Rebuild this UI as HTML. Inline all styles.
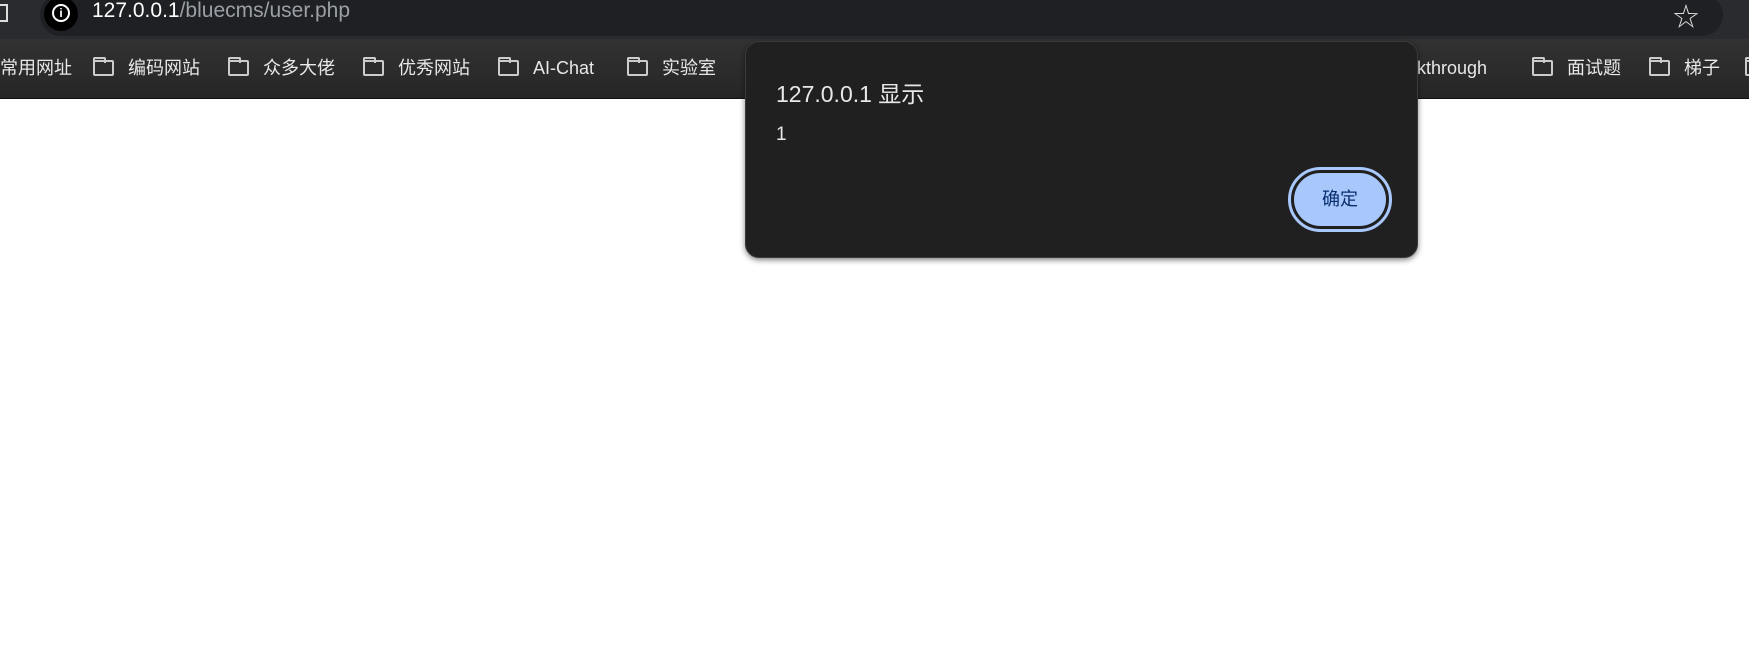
<!DOCTYPE html><html><head><meta charset="utf-8"><style>
body{margin:0;width:1749px;height:666px;background:#fff;position:relative;overflow:hidden;font-family:"Liberation Sans","Noto Sans CJK SC",sans-serif}
.top{position:absolute;left:0;top:0;width:1749px;height:39px;background:#2a2b2e}
.url{position:absolute;left:40px;top:-6px;width:1683px;height:42px;border-radius:21px;background:#1f2023}
.bm{position:absolute;left:0;top:39px;width:1749px;height:59px;background:linear-gradient(#323232,#262626);border-bottom:1px solid #111}
.t{position:absolute;color:#e8e8e8;font-size:18px;white-space:nowrap;top:56px;height:24px;line-height:24px}
.f{position:absolute;top:60px;width:21px;height:16px;border:2px solid #ccc;border-radius:2px;box-sizing:border-box}
.f:before{content:"";position:absolute;left:-2px;top:-5px;width:9px;height:4px;border:2px solid #ccc;border-bottom:none;border-radius:2px 2px 0 0}
.dlg{position:absolute;left:745px;top:41px;width:673px;height:217px;background:#202020;border-radius:14px;box-shadow:0 2px 6px rgba(0,0,0,.5);border:1px solid #3a3a3a;box-sizing:border-box}
</style></head><body>
<div class="top"><div class="url"></div>
<div style="position:absolute;left:44px;top:-3px;width:34px;height:34px;border-radius:50%;background:#000"></div>
<div style="position:absolute;left:52px;top:4px;width:14px;height:14px;border:2px solid #fff;border-radius:50%;color:#fff;font-size:12px;font-weight:bold;text-align:center;line-height:14px">i</div>
<div style="position:absolute;left:92px;top:-1px;font-size:21px;color:#fff">127.0.0.1<span style="color:#9aa0a6">/bluecms/user.php</span></div>
<div style="position:absolute;left:1673px;top:-3px;font-size:26px;color:#ddd">☆</div>
<div style="position:absolute;left:-6px;top:4px;width:10px;height:14px;border:2px solid #ddd"></div>
</div>
<div class="bm"></div>
<div class="t" style="left:0">常用网址</div>
<div class="f" style="left:93px"></div><div class="t" style="left:128px">编码网站</div>
<div class="f" style="left:228px"></div><div class="t" style="left:263px">众多大佬</div>
<div class="f" style="left:363px"></div><div class="t" style="left:398px">优秀网站</div>
<div class="f" style="left:498px"></div><div class="t" style="left:533px">AI-Chat</div>
<div class="f" style="left:627px"></div><div class="t" style="left:662px">实验室</div>
<div class="t" style="left:1413px">lkthrough</div>
<div class="f" style="left:1532px"></div><div class="t" style="left:1567px">面试题</div>
<div class="f" style="left:1649px"></div><div class="t" style="left:1684px">梯子</div>
<div class="f" style="left:1745px"></div>
<div class="dlg">
<div style="position:absolute;left:30px;top:33px;font-size:23px;color:#e8e8e8">127.0.0.1 显示</div>
<div style="position:absolute;left:30px;top:82px;font-size:19px;color:#e8e8e8">1</div>
<div style="position:absolute;left:542px;top:125px;width:104px;height:65px;border:3px solid #a8c7fa;border-radius:33px;box-sizing:border-box;padding:3px">
<div style="width:100%;height:100%;background:#a8c7fa;border-radius:28px;color:#062e6f;font-size:18px;text-align:center;line-height:53px">确定</div></div>
</div>
</body></html>
